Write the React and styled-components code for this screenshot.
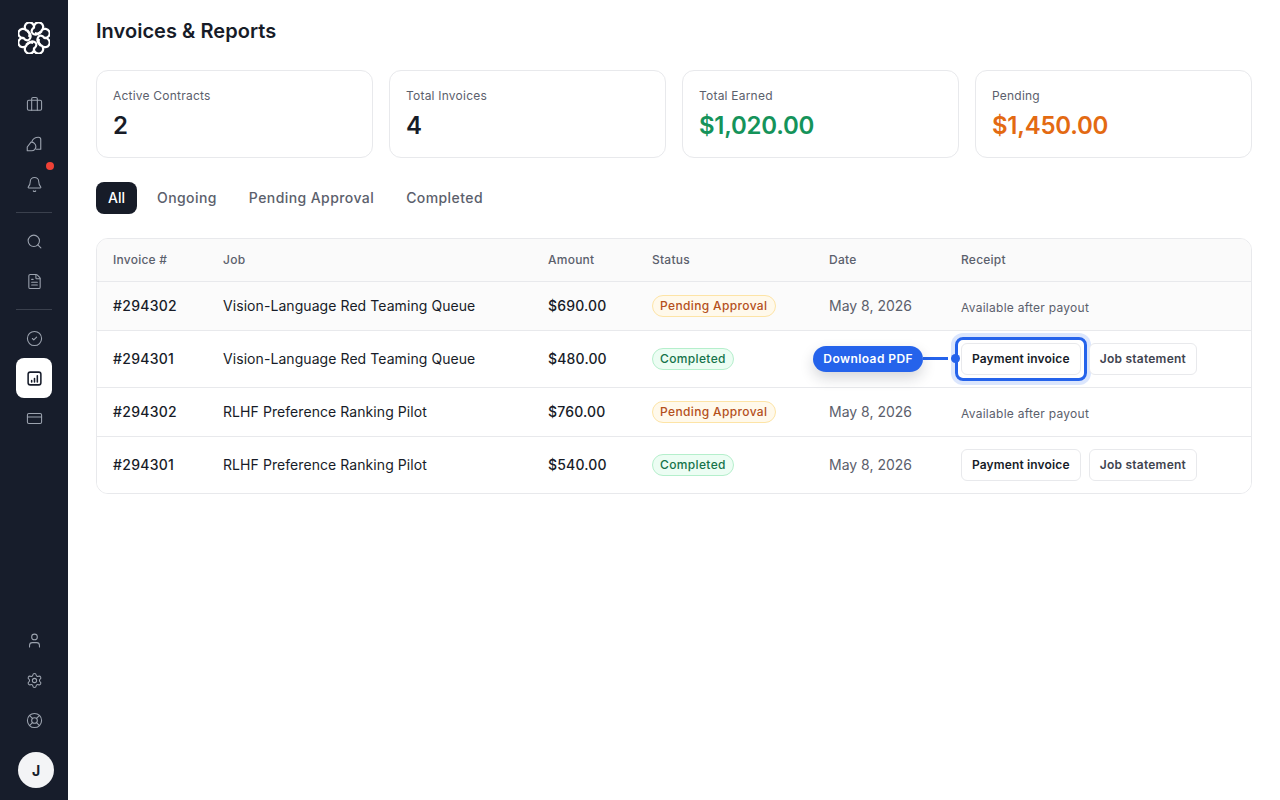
import React from 'react'
import styled, { createGlobalStyle } from 'styled-components'
import {
  Briefcase, Bell, Search, FileText, CircleCheck, CreditCard,
  User, Settings, LifeBuoy,
} from 'lucide-react'

const GlobalStyle = createGlobalStyle`
  html, body { margin: 0; padding: 0; height: 100%; background: #fff; }
  body { font-family: Inter, "Liberation Sans", sans-serif; color: #171c28; }
  #root { height: 100%; }
  * { box-sizing: border-box; }
`

const Shell = styled.div`
  display: flex;
  height: 800px;
  overflow: hidden;
`

const Sidebar = styled.aside`
  width: 68px;
  flex-shrink: 0;
  background: #171d2b;
  display: flex;
  flex-direction: column;
  align-items: center;
  padding: 22px 0 12px;
`

const LogoWrap = styled.div`
  width: 32px;
  height: 32px;
  margin-bottom: 30px;
  color: #fff;
`

const NavGroup = styled.div`
  display: flex;
  flex-direction: column;
`

const NavItem = styled.div`
  position: relative;
  width: 36px;
  height: 40px;
  border-radius: 8px;
  display: flex;
  align-items: center;
  justify-content: center;
  color: ${p => (p.$active ? '#171d2b' : '#9ca3af')};
  background: ${p => (p.$active ? '#fff' : 'transparent')};
`

const RedDot = styled.span`
  position: absolute;
  top: -2px;
  right: -2px;
  width: 8px;
  height: 8px;
  border-radius: 50%;
  background: #ef4136;
`

const Divider = styled.div`
  width: 36px;
  height: 1px;
  background: #3a404d;
  margin: 8px 0;
`

const Spacer = styled.div`
  flex: 1;
`

const Avatar = styled.div`
  width: 36px;
  height: 36px;
  margin: 12px 0 0 4px;
  border-radius: 50%;
  background: #f3f4f6;
  color: #171d2b;
  font-size: 14px;
  font-weight: 700;
  display: flex;
  align-items: center;
  justify-content: center;
`

const Main = styled.main`
  flex: 1;
  padding: 18px 28px 0;
`

const Title = styled.h1`
  margin: 0 0 26px;
  font-size: 20px;
  line-height: 26px;
  font-weight: 600;
  letter-spacing: 0.002em;
  color: #171c28;
`

const StatGrid = styled.div`
  display: grid;
  grid-template-columns: repeat(4, 1fr);
  gap: 16px;
`

const StatCard = styled.div`
  height: 88px;
  border: 1px solid #e8e9ec;
  border-radius: 12px;
  padding: 16px;
`

const StatLabel = styled.div`
  font-size: 12px;
  line-height: 18px;
  letter-spacing: 0.018em;
  color: #5b606c;
`

const StatValue = styled.div`
  font-size: 24px;
  line-height: 30px;
  margin-top: 6px;
  font-weight: 600;
  letter-spacing: -0.01em;
  color: ${p => p.$color || '#171c28'};
`

const Tabs = styled.div`
  display: flex;
  gap: 8px;
  margin: 24px 0;
`

const Tab = styled.div`
  height: 32px;
  padding: 0 12px 2px;
  border-radius: 8px;
  display: flex;
  align-items: center;
  font-size: 14px;
  font-weight: 500;
  letter-spacing: ${p => (p.$active ? '0' : '0.03em')};
  color: ${p => (p.$active ? '#fff' : '#5b606c')};
  background: ${p => (p.$active ? '#171c28' : 'transparent')};
`

const TableCard = styled.div`
  position: relative;
  border: 1px solid #e8e9ec;
  border-radius: 12px;
  overflow: hidden;
`

const Table = styled.table`
  width: 100%;
  border-collapse: collapse;
  table-layout: fixed;
`

const HeadCell = styled.th`
  height: 42px;
  padding: 0 16px;
  background: #fafafa;
  border-bottom: 1px solid #e8e9ec;
  text-align: left;
  font-size: 12px;
  font-weight: 500;
  letter-spacing: 0.02em;
  color: #5b606c;
`

const Row = styled.tr`
  height: ${p => p.$height}px;
  background: ${p => (p.$tinted ? '#fbfbfb' : '#fff')};
  border-bottom: ${p => (p.$last ? 'none' : '1px solid #e8e9ec')};
`

const Cell = styled.td`
  padding: 0 16px;
  font-size: 14px;
  letter-spacing: ${p => p.$spacing || '0.005em'};
  color: ${p => p.$color || '#171c28'};
  font-weight: ${p => p.$weight || 400};
  white-space: nowrap;
`

const Badge = styled.span`
  display: inline-flex;
  align-items: center;
  height: 22px;
  padding: 0 7.5px 0 7px;
  border-radius: 11px;
  font-size: 12px;
  font-weight: 500;
  letter-spacing: 0.03em;
  color: ${p => (p.$done ? '#15734a' : '#b4501c')};
  background: ${p => (p.$done ? '#ecfdf3' : '#fff9eb')};
  border: 1px solid ${p => (p.$done ? '#b5efcc' : '#fde4a6')};
`

const Muted = styled.span`
  position: relative;
  top: 1px;
  font-size: 12px;
  letter-spacing: 0.022em;
  color: #5b606c;
`

const ButtonRow = styled.div`
  display: flex;
  align-items: center;
  gap: 8px;
`

const ReceiptButton = styled.div`
  position: relative;
  height: 32px;
  padding: 0 10px;
  border: 1px solid #e8e9ec;
  border-radius: 6px;
  background: #fff;
  display: flex;
  align-items: center;
  font-size: 12px;
  font-weight: 600;
  letter-spacing: ${p => (p.$primary ? '0.012em' : '0.02em')};
  color: ${p => (p.$primary ? '#171c28' : '#3f4450')};
`

const Ring = styled.span`
  position: absolute;
  inset: -6px;
  border: 3px solid #2563eb;
  border-radius: 8px;
  box-shadow: 0 0 0 4px #dbe6fd;
  pointer-events: none;
`

const Anchor = styled.div`
  position: relative;
`

const Callout = styled.div`
  position: absolute;
  right: calc(100% + 38px);
  top: 50%;
  transform: translateY(-50%);
  height: 26px;
  padding: 0 10px;
  border-radius: 13px;
  background: #2563eb;
  color: #fff;
  font-size: 12px;
  font-weight: 600;
  letter-spacing: 0.035em;
  display: flex;
  align-items: center;
  white-space: nowrap;
  box-shadow: 0 6px 14px rgba(23, 29, 43, 0.18);
`

const Connector = styled.span`
  position: absolute;
  left: -38px;
  top: 50%;
  width: 25px;
  height: 3px;
  margin-top: -1.5px;
  background: #2563eb;
  &::after {
    content: '';
    position: absolute;
    right: -12px;
    top: -3px;
    width: 9px;
    height: 9px;
    border-radius: 50%;
    background: #2563eb;
  }
`

// outer scallops of the logo, one arc per lobe
const lobes = Array.from({ length: 8 }, (_, i) => {
  const a = (i * Math.PI) / 4 - Math.PI / 2
  const b = ((i + 1) * Math.PI) / 4 - Math.PI / 2
  const r = 10.6
  const from = `${(16 + r * Math.cos(a)).toFixed(2)} ${(16 + r * Math.sin(a)).toFixed(2)}`
  const to = `${(16 + r * Math.cos(b)).toFixed(2)} ${(16 + r * Math.sin(b)).toFixed(2)}`
  return `M${from}A4.6 4.6 0 1 1 ${to}`
}).join('')

function Logo() {
  return (
    <svg viewBox="0 0 32 32" width="32" height="32" fill="none" stroke="currentColor" strokeWidth="2.2" strokeLinecap="round">
      <path d={lobes} />
      {[0, 90, 180, 270].map(r => (
        <path key={r} transform={`rotate(${r} 16 16)`} d="M16 5.4c-3 2.6-3.2 5.2-.6 6.6 2.6 1.4 5 .2 6.6-1.8M9.6 8.6c1.8 1.8 2.4 3.6 1.6 5.6" />
      ))}
    </svg>
  )
}

function ShapesIcon() {
  return (
    <svg width="18" height="18" viewBox="0 0 24 24" fill="none" stroke="currentColor" strokeWidth="1.5" strokeLinejoin="round">
      <path d="M9 9C10.5 5 14 3 18 3c2 0 3 1 3 3v13h-6.5" />
      <path d="M3 21v-5l5-6.5a6 6 0 0 1 6.5 6A5.5 5.5 0 0 1 9 21z" />
    </svg>
  )
}

function ReportIcon() {
  return (
    <svg width="17" height="17" viewBox="0 0 24 24" fill="none" stroke="currentColor" strokeWidth="2.2" strokeLinecap="round">
      <rect x="3" y="3" width="18" height="18" rx="3" />
      <path d="M8 17v-2M12 17v-5M16 17V8" />
    </svg>
  )
}

const rows = [
  { id: '#294302', job: 'Vision-Language Red Teaming Queue', amount: '$690.00', done: false, height: 49, tinted: true },
  { id: '#294301', job: 'Vision-Language Red Teaming Queue', amount: '$480.00', done: true, height: 57, callout: true },
  { id: '#294302', job: 'RLHF Preference Ranking Pilot', amount: '$760.00', done: false, height: 49 },
  { id: '#294301', job: 'RLHF Preference Ranking Pilot', amount: '$540.00', done: true, height: 57 },
]

const stats = [
  { label: 'Active Contracts', value: '2' },
  { label: 'Total Invoices', value: '4' },
  { label: 'Total Earned', value: '$1,020.00', color: '#15935a' },
  { label: 'Pending', value: '$1,450.00', color: '#e36a12' },
]

const columns = [
  { name: 'Invoice #', width: 110 },
  { name: 'Job', width: 325 },
  { name: 'Amount', width: 104 },
  { name: 'Status', width: 177 },
  { name: 'Date', width: 132 },
  { name: 'Receipt' },
]

export default function App() {
  return (
    <>
      <GlobalStyle />
      <Shell>
        <Sidebar>
          <LogoWrap><Logo /></LogoWrap>
          <NavGroup>
            <NavItem><Briefcase size={17} strokeWidth={1.5} /></NavItem>
            <NavItem><ShapesIcon /></NavItem>
            <NavItem><Bell size={17} strokeWidth={1.5} /><RedDot /></NavItem>
          </NavGroup>
          <Divider />
          <NavGroup>
            <NavItem><Search size={17} strokeWidth={1.5} /></NavItem>
            <NavItem><FileText size={17} strokeWidth={1.5} /></NavItem>
          </NavGroup>
          <Divider />
          <NavGroup>
            <NavItem><CircleCheck size={17} strokeWidth={1.5} /></NavItem>
            <NavItem $active><ReportIcon /></NavItem>
            <NavItem><CreditCard size={17} strokeWidth={1.5} /></NavItem>
          </NavGroup>
          <Spacer />
          <NavGroup>
            <NavItem><User size={17} strokeWidth={1.5} /></NavItem>
            <NavItem><Settings size={17} strokeWidth={1.5} /></NavItem>
            <NavItem><LifeBuoy size={17} strokeWidth={1.5} /></NavItem>
          </NavGroup>
          <Avatar>J</Avatar>
        </Sidebar>
        <Main>
          <Title>Invoices &amp; Reports</Title>
          <StatGrid>
            {stats.map(s => (
              <StatCard key={s.label}>
                <StatLabel>{s.label}</StatLabel>
                <StatValue $color={s.color}>{s.value}</StatValue>
              </StatCard>
            ))}
          </StatGrid>
          <Tabs>
            <Tab $active>All</Tab>
            <Tab>Ongoing</Tab>
            <Tab>Pending Approval</Tab>
            <Tab>Completed</Tab>
          </Tabs>
          <TableCard>
            <Table>
              <colgroup>
                {columns.map(c => <col key={c.name} style={c.width ? { width: c.width } : undefined} />)}
              </colgroup>
              <thead>
                <tr>{columns.map(c => <HeadCell key={c.name}>{c.name}</HeadCell>)}</tr>
              </thead>
              <tbody>
                {rows.map((r, i) => (
                  <Row key={i} $height={r.height} $tinted={r.tinted} $last={i === rows.length - 1}>
                    <Cell $weight={500} $spacing="0.02em">{r.id}</Cell>
                    <Cell>{r.job}</Cell>
                    <Cell $weight={500} $spacing="0.012em">{r.amount}</Cell>
                    <Cell><Badge $done={r.done}>{r.done ? 'Completed' : 'Pending Approval'}</Badge></Cell>
                    <Cell $color="#5b606c" $spacing="0">{!r.callout && 'May 8, 2026'}</Cell>
                    <Cell>
                      {r.done ? (
                        <ButtonRow>
                          <Anchor>
                            <ReceiptButton $primary>Payment invoice</ReceiptButton>
                            {r.callout && (
                              <>
                                <Ring />
                                <Connector />
                                <Callout>Download PDF</Callout>
                              </>
                            )}
                          </Anchor>
                          <ReceiptButton>Job statement</ReceiptButton>
                        </ButtonRow>
                      ) : (
                        <Muted>Available after payout</Muted>
                      )}
                    </Cell>
                  </Row>
                ))}
              </tbody>
            </Table>
          </TableCard>
        </Main>
      </Shell>
    </>
  )
}
